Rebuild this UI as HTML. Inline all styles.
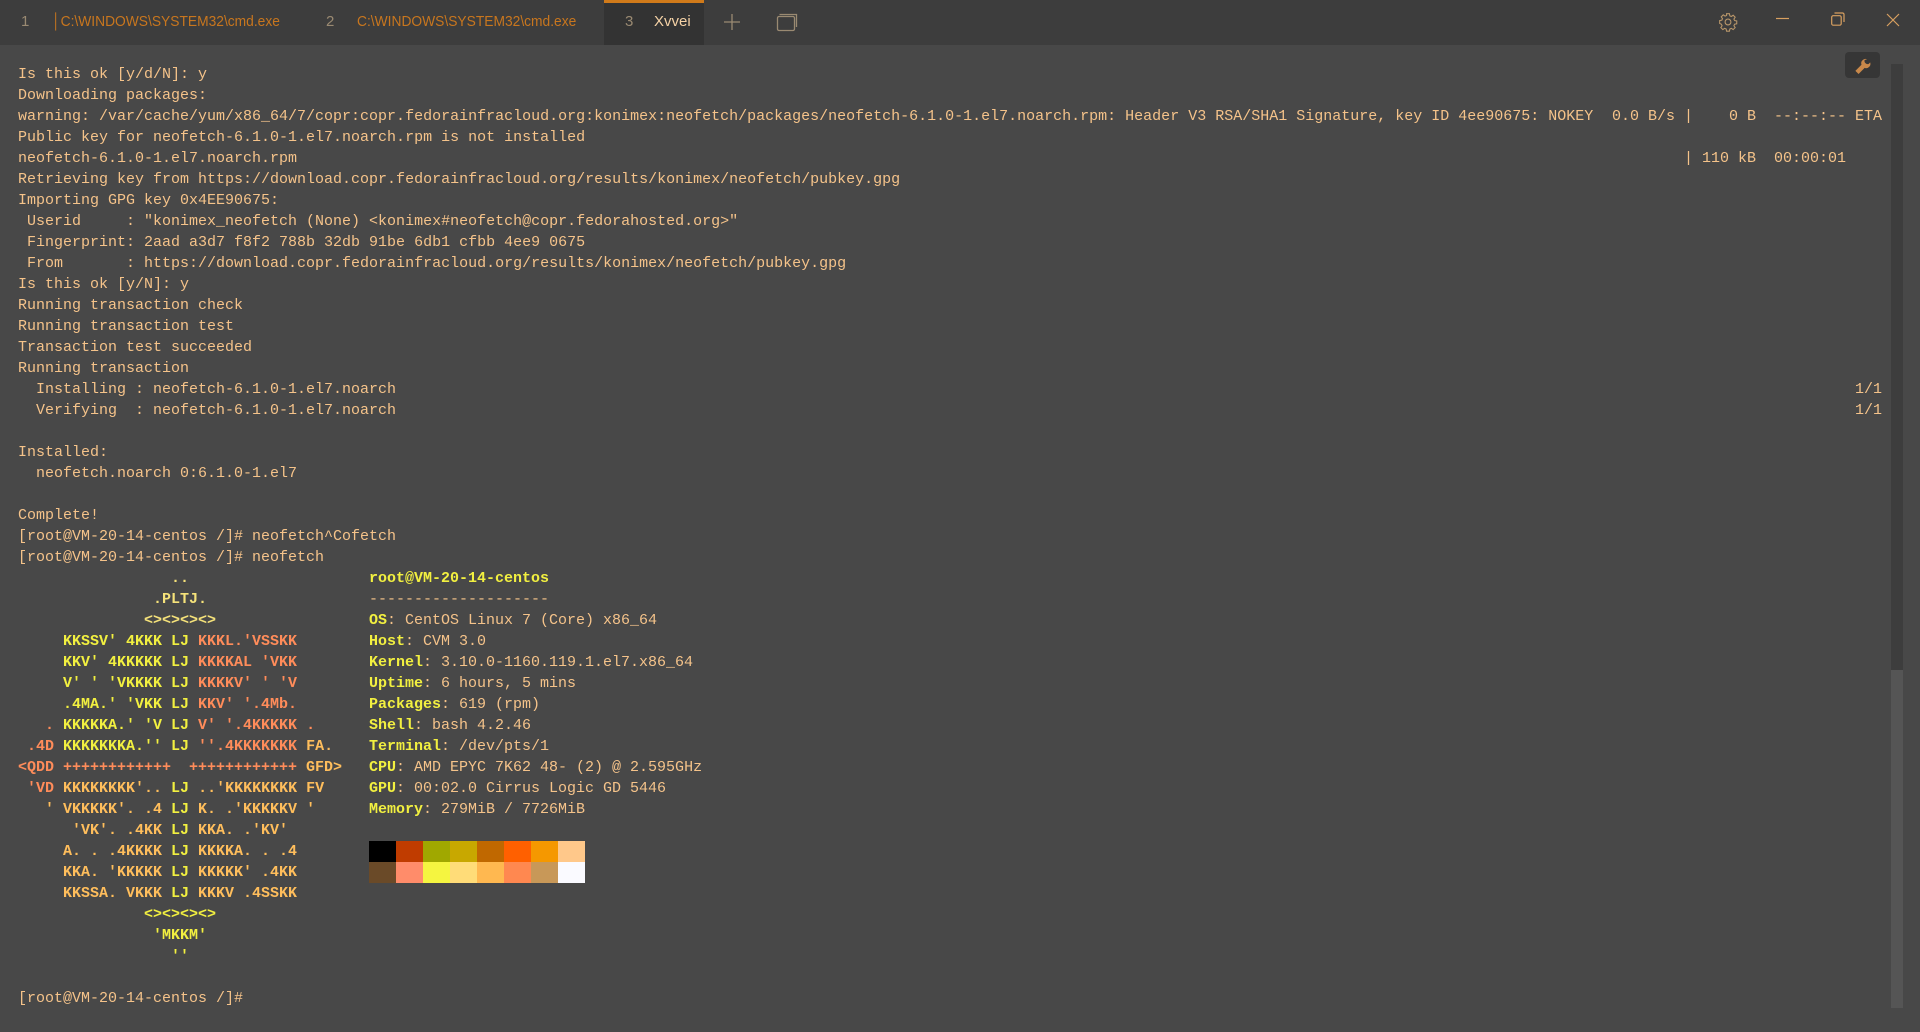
<!DOCTYPE html>
<html><head><meta charset="utf-8"><style>
html,body{margin:0;padding:0;width:1920px;height:1032px;overflow:hidden;background:#484848;}
#bar{position:absolute;left:0;top:0;width:1920px;height:45px;background:#3d3d3d;font-family:"Liberation Sans",sans-serif;font-size:15px;}
.t{position:absolute;top:13px;white-space:nowrap;}
.n{color:#9a8a72;}
.o{color:#c8761e;transform:scaleX(.92);transform-origin:left;}
#act{position:absolute;left:604px;top:0;width:100px;height:45px;background:#333333;border-top:3px solid #d07a1a;box-sizing:border-box;}
pre{position:absolute;left:18px;top:64px;margin:0;font-family:"Liberation Mono",monospace;font-size:15px;line-height:21px;color:#f5c38a;}
.r{position:absolute;font-family:"Liberation Mono",monospace;font-size:15px;line-height:21px;color:#f5c38a;white-space:pre;}
.y{color:#f2f040;font-weight:bold}
.s{color:#ff8c5a;font-weight:bold}
.l{color:#ffbe5c;font-weight:bold}
.p{color:#f5e27a;font-weight:bold}
.k{color:#f2f040;font-weight:bold}
.sw{position:absolute;width:27px;height:21px;}
</style></head><body>
<div id="bar">
<div id="act"></div>
<span class="t n" style="left:21px">1</span>
<span class="t o" style="left:52px">│C:\WINDOWS\SYSTEM32\cmd.exe</span>
<span class="t n" style="left:326px">2</span>
<span class="t o" style="left:357px">C:\WINDOWS\SYSTEM32\cmd.exe</span>
<span class="t n" style="left:625px">3</span>
<span class="t" style="left:654px;color:#f5d2a6">Xvvei</span>
<svg style="position:absolute;left:723px;top:13px" width="18" height="18"><path d="M9 1V17M1 9H17" stroke="#9a8a72" stroke-width="1.3"/></svg>
<svg style="position:absolute;left:776px;top:12px" width="22" height="20"><rect x="1.5" y="4.5" width="17" height="14" rx="1.5" fill="none" stroke="#9a8a72" stroke-width="1.3"/><path d="M3.5 2.5H20.5V15" fill="none" stroke="#9a8a72" stroke-width="1.3"/></svg>
<svg style="position:absolute;left:1718px;top:12px" width="20" height="20" viewBox="0 0 24 24"><path d="M12 8.5a3.5 3.5 0 1 0 0 7a3.5 3.5 0 1 0 0-7zM10.3 2h3.4l.5 2.6 1.8.8 2.2-1.5 2.4 2.4-1.5 2.2.8 1.8 2.6.5v3.4l-2.6.5-.8 1.8 1.5 2.2-2.4 2.4-2.2-1.5-1.8.8-.5 2.6h-3.4l-.5-2.6-1.8-.8-2.2 1.5-2.4-2.4 1.5-2.2-.8-1.8L2 13.7v-3.4l2.6-.5.8-1.8-1.5-2.2 2.4-2.4 2.2 1.5 1.8-.8z" fill="none" stroke="#b8966a" stroke-width="1.3"/></svg>
<svg style="position:absolute;left:1776px;top:17px" width="14" height="4"><path d="M0 1.5H13" stroke="#d8a060" stroke-width="1.2"/></svg>
<svg style="position:absolute;left:1831px;top:12px" width="14" height="14"><rect x=".7" y="3.7" width="9.5" height="9.5" rx="1.5" fill="none" stroke="#d8a060" stroke-width="1.2"/><path d="M3.5 1H11.5a1.5 1.5 0 0 1 1.5 1.5V10" fill="none" stroke="#d8a060" stroke-width="1.2"/></svg>
<svg style="position:absolute;left:1886px;top:13px" width="14" height="14"><path d="M1 1L13 13M13 1L1 13" stroke="#d8a060" stroke-width="1.2"/></svg>
</div>
<div style="position:absolute;left:1845px;top:52px;width:35px;height:26px;background:#363636;border-radius:4px"></div>
<svg style="position:absolute;left:1853px;top:55px" width="19" height="19" viewBox="0 0 24 24"><path d="M14.7 6.3a4 4 0 0 0 5 5l2-2a5.5 5.5 0 0 1-7 7L7 24 3 20l7.7-7.7a5.5 5.5 0 0 1 7-7z" fill="#c8884a"/></svg>
<div style="position:absolute;left:1891px;top:64px;width:12px;height:944px;background:#3d3d3d"></div>
<div style="position:absolute;left:1891px;top:670px;width:12px;height:338px;background:#555555"></div>
<pre>Is this ok [y/d/N]: y
Downloading packages:
warning: /var/cache/yum/x86_64/7/copr:copr.fedorainfracloud.org:konimex:neofetch/packages/neofetch-6.1.0-1.el7.noarch.rpm: Header V3 RSA/SHA1 Signature, key ID 4ee90675: NOKEY
Public key for neofetch-6.1.0-1.el7.noarch.rpm is not installed
neofetch-6.1.0-1.el7.noarch.rpm
Retrieving key from https://download.copr.fedorainfracloud.org/results/konimex/neofetch/pubkey.gpg
Importing GPG key 0x4EE90675:
 Userid     : "konimex_neofetch (None) &lt;konimex#neofetch@copr.fedorahosted.org&gt;"
 Fingerprint: 2aad a3d7 f8f2 788b 32db 91be 6db1 cfbb 4ee9 0675
 From       : https://download.copr.fedorainfracloud.org/results/konimex/neofetch/pubkey.gpg
Is this ok [y/N]: y
Running transaction check
Running transaction test
Transaction test succeeded
Running transaction
  Installing : neofetch-6.1.0-1.el7.noarch
  Verifying  : neofetch-6.1.0-1.el7.noarch

Installed:
  neofetch.noarch 0:6.1.0-1.el7

Complete!
[root@VM-20-14-centos /]# neofetch^Cofetch
[root@VM-20-14-centos /]# neofetch
<span class="p">                 ..</span>
<span class="p">               .PLTJ.</span>
<span class="p">              &lt;&gt;&lt;&gt;&lt;&gt;&lt;&gt;</span>
<span class="y">     KKSSV' 4KKK LJ </span><span class="s">KKKL.'VSSKK</span>
<span class="y">     KKV' 4KKKKK LJ </span><span class="s">KKKKAL 'VKK</span>
<span class="y">     V' ' 'VKKKK LJ </span><span class="s">KKKKV' ' 'V</span>
<span class="y">     .4MA.' 'VKK LJ </span><span class="s">KKV' '.4Mb.</span>
<span class="s">   . </span><span class="y">KKKKKA.' 'V LJ </span><span class="s">V' '.4KKKKK .</span>
<span class="s"> .4D </span><span class="y">KKKKKKKA.'' LJ </span><span class="s">''.4KKKKKKK </span><span class="l">FA.</span>
<span class="s">&lt;QDD ++++++++++++  ++++++++++++ </span><span class="l">GFD&gt;</span>
<span class="s"> 'VD </span><span class="l">KKKKKKKK'.. </span><span class="y">LJ </span><span class="l">..'KKKKKKKK FV</span>
<span class="l">   ' VKKKKK'. .4 </span><span class="y">LJ </span><span class="l">K. .'KKKKKV '</span>
<span class="l">      'VK'. .4KK </span><span class="y">LJ </span><span class="l">KKA. .'KV'</span>
<span class="l">     A. . .4KKKK </span><span class="y">LJ </span><span class="l">KKKKA. . .4</span>
<span class="l">     KKA. 'KKKKK </span><span class="y">LJ </span><span class="l">KKKKK' .4KK</span>
<span class="l">     KKSSA. VKKK </span><span class="y">LJ </span><span class="l">KKKV .4SSKK</span>
<span class="y">              &lt;&gt;&lt;&gt;&lt;&gt;&lt;&gt;</span>
<span class="y">               'MKKM'</span>
<span class="y">                 ''</span>

[root@VM-20-14-centos /]#</pre>
<pre style="left:369px;top:568px"><span class="y">root@VM-20-14-centos</span>
--------------------
<span class="k">OS</span>: CentOS Linux 7 (Core) x86_64
<span class="k">Host</span>: CVM 3.0
<span class="k">Kernel</span>: 3.10.0-1160.119.1.el7.x86_64
<span class="k">Uptime</span>: 6 hours, 5 mins
<span class="k">Packages</span>: 619 (rpm)
<span class="k">Shell</span>: bash 4.2.46
<span class="k">Terminal</span>: /dev/pts/1
<span class="k">CPU</span>: AMD EPYC 7K62 48- (2) @ 2.595GHz
<span class="k">GPU</span>: 00:02.0 Cirrus Logic GD 5446
<span class="k">Memory</span>: 279MiB / 7726MiB</pre>
<div class="r" style="right:38px;top:106px">  0.0 B/s |    0 B  --:--:-- ETA</div>
<div class="r" style="left:1684px;top:148px">| 110 kB  00:00:01</div>
<div class="r" style="right:38px;top:379px">1/1</div>
<div class="r" style="right:38px;top:400px">1/1</div>
<div class="sw" style="left:369px;top:841px;background:#000000"></div>
<div class="sw" style="left:396px;top:841px;background:#c03c00"></div>
<div class="sw" style="left:423px;top:841px;background:#a0a800"></div>
<div class="sw" style="left:450px;top:841px;background:#c8a800"></div>
<div class="sw" style="left:477px;top:841px;background:#c06800"></div>
<div class="sw" style="left:504px;top:841px;background:#ff6000"></div>
<div class="sw" style="left:531px;top:841px;background:#f59800"></div>
<div class="sw" style="left:558px;top:841px;background:#ffc88a"></div>
<div class="sw" style="left:369px;top:862px;background:#6a4a28"></div>
<div class="sw" style="left:396px;top:862px;background:#ff8c6a"></div>
<div class="sw" style="left:423px;top:862px;background:#f5f540"></div>
<div class="sw" style="left:450px;top:862px;background:#ffdc78"></div>
<div class="sw" style="left:477px;top:862px;background:#ffb850"></div>
<div class="sw" style="left:504px;top:862px;background:#ff8850"></div>
<div class="sw" style="left:531px;top:862px;background:#c89858"></div>
<div class="sw" style="left:558px;top:862px;background:#fafaff"></div>
</body></html>
